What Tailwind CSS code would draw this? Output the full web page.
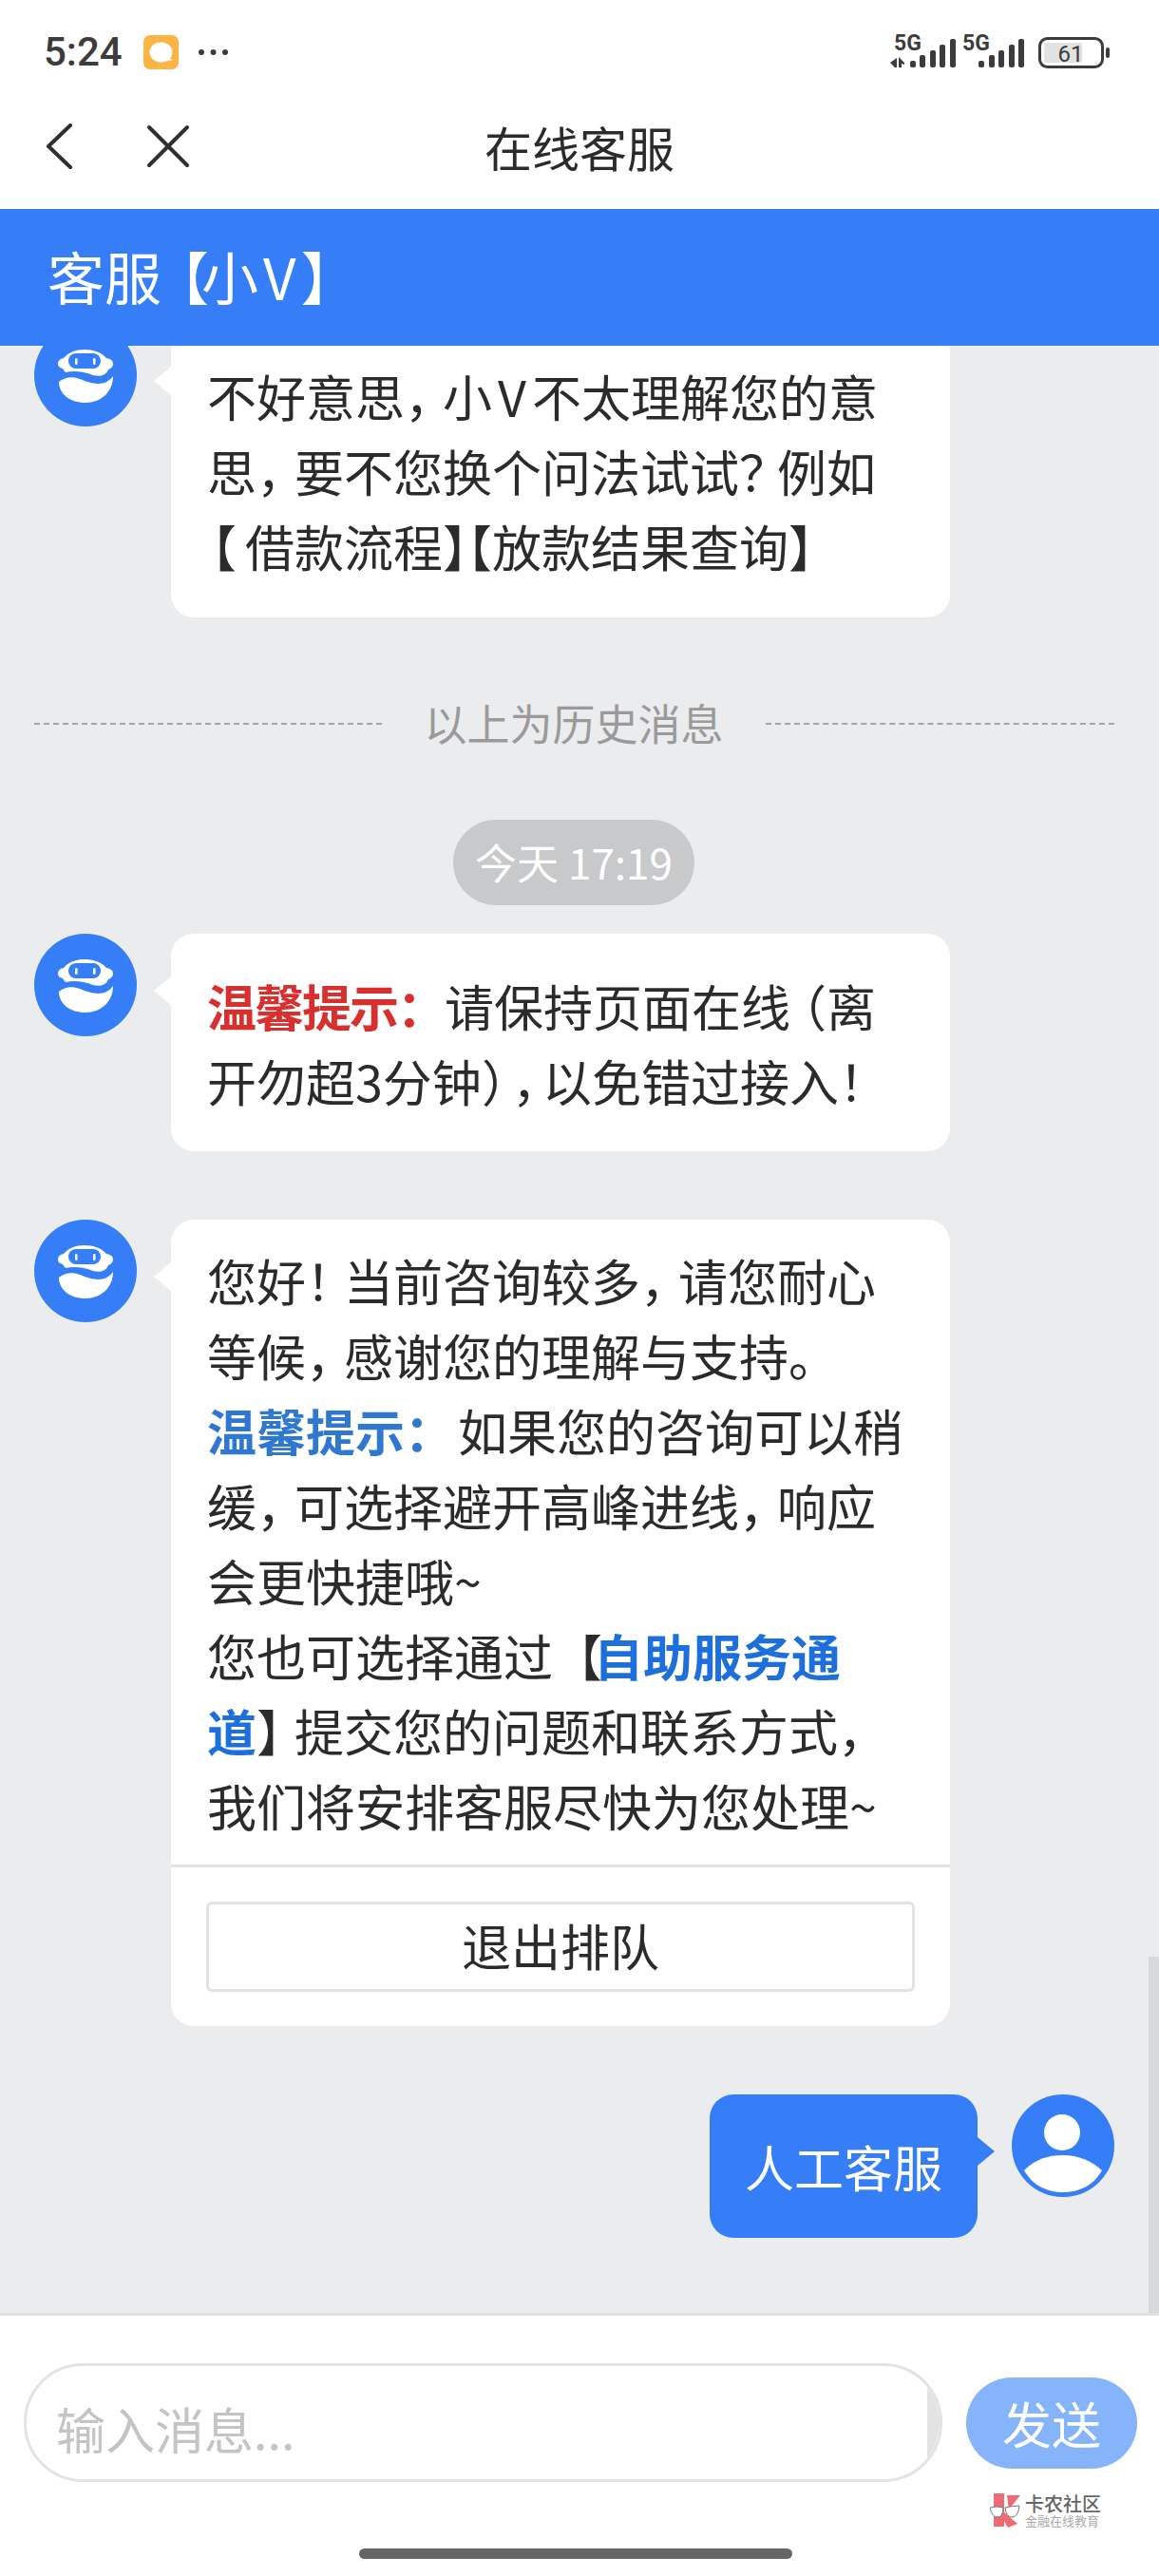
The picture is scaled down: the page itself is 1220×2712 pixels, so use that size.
<!DOCTYPE html>
<html lang="zh-CN">
<head>
<meta charset="utf-8">
<title>在线客服</title>
<script src="https://cdn.jsdelivr.net/npm/@tailwindcss/browser@4"></script>
</head>
<body class="bg-white">
<div class="w-[1220px] h-[2712px] flex flex-col overflow-hidden bg-white text-[#2b2b2b] [text-spacing-trim:space-all] font-['Noto_Sans_CJK_SC','Noto_Sans',sans-serif]">

  <!-- status bar -->
  <div class="h-[100px] shrink-0 flex items-center justify-between pl-[46px] pr-[50px] pt-[10px]">
    <div class="flex items-center">
      <span class="font-['Roboto',sans-serif] font-medium text-[42px] leading-none text-[#3c3c3c]">5:24</span>
      <svg class="ml-[22px]" width="37" height="36" viewBox="0 0 37 36"><rect width="37" height="36" rx="7" fill="#fbb545"/><ellipse cx="18.5" cy="18" rx="12" ry="10.5" fill="#fff"/><path d="M26 24l5 2-7 1z" fill="#fff"/></svg>
      <svg class="ml-[20px]" width="33" height="8" viewBox="0 0 33 8"><circle cx="4" cy="4" r="3" fill="#3c3c3c"/><circle cx="16.5" cy="4" r="3" fill="#3c3c3c"/><circle cx="29" cy="4" r="3" fill="#3c3c3c"/></svg>
    </div>
    <svg width="234" height="44" viewBox="936 32 234 44">
      <text x="941" y="52" font-family="Roboto, sans-serif" font-weight="700" font-size="23" fill="#3c3c3c">5G</text>
      <text x="1013" y="52" font-family="Roboto, sans-serif" font-weight="700" font-size="23" fill="#3c3c3c">5G</text>
      <path d="M937 65l7-5v10h-2zM946 59l6 6v2l-3-1v4h-3z" fill="#3c3c3c"/>
      <g fill="#3c3c3c">
        <rect x="958" y="63" width="6" height="7" rx="2"/><rect x="968" y="57" width="6" height="13" rx="2"/><rect x="979" y="52" width="6" height="18" rx="2"/><rect x="989" y="46" width="6" height="24" rx="2"/><rect x="1000" y="40" width="6" height="30" rx="2"/>
        <rect x="1030" y="63" width="6" height="7" rx="2"/><rect x="1041" y="57" width="6" height="13" rx="2"/><rect x="1051" y="52" width="6" height="18" rx="2"/><rect x="1062" y="46" width="6" height="24" rx="2"/><rect x="1072" y="40" width="6" height="30" rx="2"/>
      </g>
      <rect x="1094.5" y="39.5" width="66" height="30" rx="8" fill="#fff" stroke="#3c3c3c" stroke-width="3"/>
      <rect x="1099" y="44" width="40" height="21" rx="2" fill="#e2e2e2"/>
      <text x="1127" y="64" text-anchor="middle" font-family="Roboto, sans-serif" font-size="24" fill="#3c3c3c">61</text>
      <rect x="1164" y="49" width="4" height="11" rx="2" fill="#3c3c3c"/>
    </svg>
  </div>

  <!-- nav -->
  <div class="h-[120px] shrink-0 flex items-center pb-[12px]">
    <div class="w-[510px] shrink-0 flex items-center pl-[48px]">
      <svg width="28" height="48" viewBox="0 0 28 48" fill="none" stroke="#2f2f2f" stroke-width="4" stroke-linecap="round" stroke-linejoin="round"><path d="M26 2L3 24l23 22"/></svg>
      <svg class="ml-[78px]" width="46" height="46" viewBox="0 0 46 46" fill="none" stroke="#2f2f2f" stroke-width="4" stroke-linecap="round"><path d="M3 3l40 40M43 3L3 43"/></svg>
    </div>
    <div class="text-[50px] leading-none text-[#2b2b2b]">在线客服</div>
  </div>

  <!-- blue header -->
  <div class="h-[144px] shrink-0 bg-[#357ef7] text-white text-[60px] leading-none flex items-center pl-[50px] pb-[4px] whitespace-nowrap"><div>客服<span class="ml-[-10px] tracking-[-8px]">【</span>小<span class="mx-[5px]">V</span>】</div></div>

  <!-- chat -->
  <div class="relative flex-1 bg-[#ebecee] overflow-hidden px-[36px] text-[52px] leading-[79px]">
    <div class="absolute right-0 top-[1696px] bottom-0 w-[11px] bg-[#d8d9dc]"></div>

    <!-- bubble 1 -->
    <div class="flex gap-[36px] mt-[-23px]">
      <svg class="shrink-0" width="108" height="108" viewBox="0 0 108 108"><circle cx="54" cy="54" r="54" fill="#357ef7"/><path d="M25 42Q25 37 31 36C36 30 44 27 53 27C62 27 71 30 76 36Q83 37 83 42Q83 46 78 48C76 54 70 56 62 54C52 50 42 49 33 51C31 49 30 47 30 47Q25 46 25 42Z" fill="#fff"/><rect x="36" y="31" width="34" height="16" rx="8" fill="#357ef7"/><rect x="43" y="36" width="2.5" height="7" rx="1.2" fill="#fff"/><rect x="62" y="36" width="2.5" height="7" rx="1.2" fill="#fff"/><path d="M26 61C32 56 40 55 48 58C58 62 74 68 83 55C83 72 70 83 54 83C38 83 26 74 26 61Z" fill="#fff"/></svg>
      <div class="relative w-[820px] bg-white rounded-[24px] pl-[38px] pt-[36px] pb-[36px] whitespace-nowrap">
        <div class="absolute left-[-18px] top-[45px] w-0 h-0 border-y-[15px] border-y-transparent border-r-[18px] border-r-white"></div>
        <div>不好意思<span class="tracking-[-12px]">，</span>小<span class="mx-[6px]">V</span>不太理解您的意</div>
        <div>思<span class="tracking-[-12px]">，</span>要不您换个问法试试<span class="tracking-[-12px]">？</span>例如</div>
        <div><span class="ml-[-21px] tracking-[9px]">【</span>借款流程<span class="tracking-[-52px]">】</span>【放款结果查询】</div>
      </div>
    </div>

    <!-- history divider -->
    <div class="flex items-center justify-between mt-[72px] h-[80px] pr-[11px] text-[45px] leading-none text-[#9a9a9a]">
      <div class="w-[366px] border-t-2 border-dashed border-[#a5a5a5]"></div>
      <span class="pb-[4px]">以上为历史消息</span>
      <div class="w-[367px] border-t-2 border-dashed border-[#a5a5a5]"></div>
    </div>

    <!-- time pill -->
    <div class="flex justify-center mt-[61px] pr-[12px]">
      <div class="w-[254px] h-[90px] rounded-full bg-[#c8c9cb] text-white text-[44px] leading-none flex items-center justify-center pb-[3px]">今天 17:19</div>
    </div>

    <!-- bubble 2 -->
    <div class="flex gap-[36px] mt-[30px]">
      <svg class="shrink-0" width="108" height="108" viewBox="0 0 108 108"><circle cx="54" cy="54" r="54" fill="#357ef7"/><path d="M25 42Q25 37 31 36C36 30 44 27 53 27C62 27 71 30 76 36Q83 37 83 42Q83 46 78 48C76 54 70 56 62 54C52 50 42 49 33 51C31 49 30 47 30 47Q25 46 25 42Z" fill="#fff"/><rect x="36" y="31" width="34" height="16" rx="8" fill="#357ef7"/><rect x="43" y="36" width="2.5" height="7" rx="1.2" fill="#fff"/><rect x="62" y="36" width="2.5" height="7" rx="1.2" fill="#fff"/><path d="M26 61C32 56 40 55 48 58C58 62 74 68 83 55C83 72 70 83 54 83C38 83 26 74 26 61Z" fill="#fff"/></svg>
      <div class="relative w-[820px] bg-white rounded-[24px] pl-[38px] pt-[36px] pb-[35px] whitespace-nowrap">
        <div class="absolute left-[-18px] top-[45px] w-0 h-0 border-y-[15px] border-y-transparent border-r-[18px] border-r-white"></div>
        <div><span class="font-bold text-[#d8302f] tracking-[-2px]">温馨提示：</span>请保持页面在线<span class="ml-[-14px]">（</span>离</div>
        <div>开勿超3分钟<span class="tracking-[-20px]">）</span><span class="tracking-[-20px]">，</span>以免错过接入！</div>
      </div>
    </div>

    <!-- bubble 3 -->
    <div class="flex gap-[36px] mt-[72px]">
      <svg class="shrink-0" width="108" height="108" viewBox="0 0 108 108"><circle cx="54" cy="54" r="54" fill="#357ef7"/><path d="M25 42Q25 37 31 36C36 30 44 27 53 27C62 27 71 30 76 36Q83 37 83 42Q83 46 78 48C76 54 70 56 62 54C52 50 42 49 33 51C31 49 30 47 30 47Q25 46 25 42Z" fill="#fff"/><rect x="36" y="31" width="34" height="16" rx="8" fill="#357ef7"/><rect x="43" y="36" width="2.5" height="7" rx="1.2" fill="#fff"/><rect x="62" y="36" width="2.5" height="7" rx="1.2" fill="#fff"/><path d="M26 61C32 56 40 55 48 58C58 62 74 68 83 55C83 72 70 83 54 83C38 83 26 74 26 61Z" fill="#fff"/></svg>
      <div class="relative w-[820px] h-[849px] bg-white rounded-[24px] whitespace-nowrap">
        <div class="absolute left-[-18px] top-[45px] w-0 h-0 border-y-[15px] border-y-transparent border-r-[18px] border-r-white"></div>
        <div class="pl-[38px] pt-[24px] h-[682px] border-b-[3px] border-[#e3e3e3]">
          <div>您好<span class="tracking-[-12px]">！</span>当前咨询较多<span class="tracking-[-12px]">，</span>请您耐心</div>
          <div>等候<span class="tracking-[-12px]">，</span>感谢您的理解与支持。</div>
          <div><span class="font-semibold text-[#2f78d2] mr-[4px]">温馨提示：</span>如果您的咨询可以稍</div>
          <div>缓<span class="tracking-[-12px]">，</span>可选择避开高峰进线<span class="tracking-[-12px]">，</span>响应</div>
          <div>会更快捷哦~</div>
          <div>您也可选择通过<span class="tracking-[-9px]">【</span><span class="font-bold text-[#1d6fdc]">自助服务通</span></div>
          <div><span class="font-bold text-[#1d6fdc]">道</span><span class="tracking-[-12px]">】</span>提交您的问题和联系方式，</div>
          <div>我们将安排客服尽快为您处理~</div>
        </div>
        <div class="mx-[37px] mt-[36px] h-[95px] border-[3px] border-[#e3e3e3] rounded-[6px] flex items-center justify-center leading-none pb-[3px]">退出排队</div>
      </div>
    </div>

    <!-- user bubble -->
    <div class="flex justify-end gap-[36px] mt-[72px] pr-[11px]">
      <div class="relative w-[282px] h-[151px] bg-[#357ef7] rounded-[25px] text-white flex items-center justify-center leading-none">
        <div class="absolute right-[-18px] top-[45px] w-0 h-0 border-y-[15px] border-y-transparent border-l-[18px] border-l-[#357ef7]"></div>
        人工客服
      </div>
      <svg class="shrink-0" width="108" height="108" viewBox="0 0 108 108"><circle cx="54" cy="54" r="54" fill="#357ef7"/><circle cx="53" cy="40" r="19" fill="#fff"/><path d="M13 80C25 68 38 64 54 64C70 64 84 70 95 80C86 96 71 103 54 103C37 103 22 96 13 80Z" fill="#fff"/></svg>
    </div>
  </div>

  <!-- footer -->
  <div class="relative h-[277px] shrink-0 bg-white border-t-[3px] border-[#e0e1e3]">
    <div class="flex items-start pl-[25px] pt-[50px]">
      <div class="relative w-[967px] h-[125px] rounded-[62px] border-[3px] border-[#e3e3e3] overflow-hidden pl-[31px] pt-[12px] flex items-center text-[52px] leading-none text-[#c4c4c4]">
        输入消息...
        <div class="absolute right-0 top-0 bottom-0 w-[13px] bg-[#e3e3e3]"></div>
      </div>
      <div class="ml-[25px] mt-[15px] w-[180px] h-[96px] rounded-[48px] bg-[#85b4fb] text-white text-[52px] leading-none flex items-center justify-center">发送</div>
    </div>
    <div class="absolute left-[1042px] top-[187px] flex items-center gap-[5px]">
      <svg width="32" height="36" viewBox="0 0 32 36"><path d="M4 0h11v35H4z" fill="#ec6b74"/><path d="M18 2h14L20 17z" fill="#ec6b74"/><path d="M15 20L29 32l-10 4-7-12z" fill="#ec6b74"/><path d="M0 15Q8 13 14 15Q14 25 8 25Q2 25 0 15ZM16 15Q24 13 31 13Q30 25 23 25Q17 25 16 15Z" fill="#fff" stroke="#777" stroke-width="1"/></svg>
      <div class="flex flex-col text-[#666]">
        <span class="text-[20px] leading-[21px] font-medium">卡农社区</span>
        <span class="text-[13px] leading-[15px] text-[#aaa] whitespace-nowrap">金融在线教育</span>
      </div>
    </div>
    <div class="absolute left-[378px] top-[245px] w-[456px] h-[11px] rounded-full bg-[#666]"></div>
  </div>
</div>
</body>
</html>
